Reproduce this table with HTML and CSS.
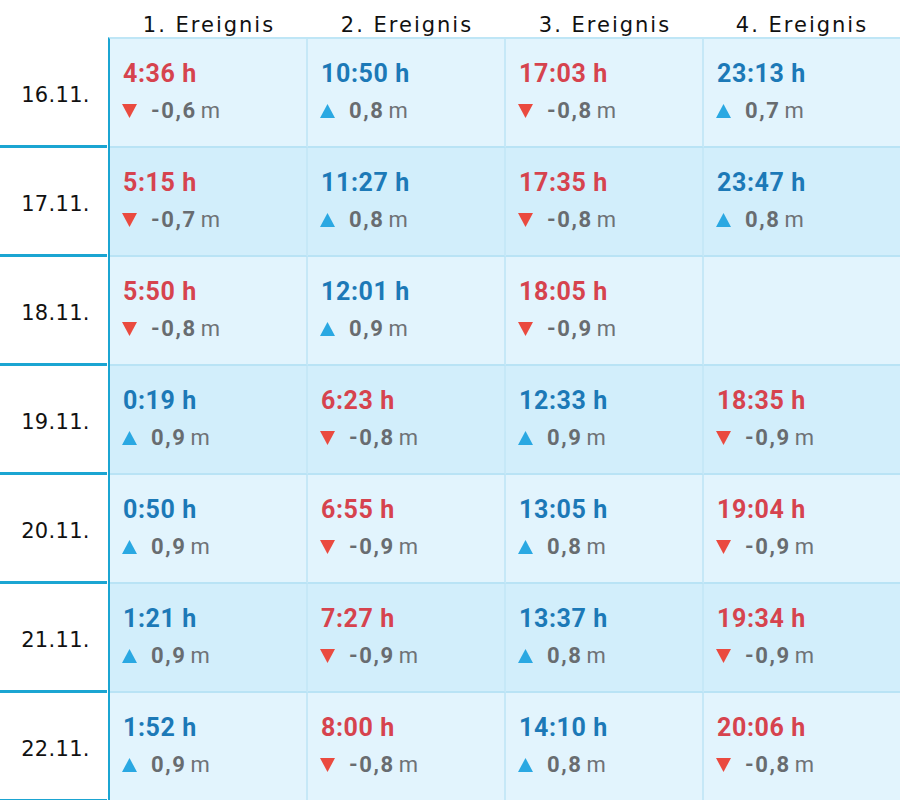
FILE: index.html
```html
<!DOCTYPE html>
<html lang="de">
<head>
<meta charset="utf-8">
<title>Gezeiten</title>
<link rel="stylesheet" href="styles.css">
</head>
<body>
<div class="page">
  <div class="head">
    <div class="corner"></div>
    <div class="hcell">1. Ereignis</div>
    <div class="hcell">2. Ereignis</div>
    <div class="hcell">3. Ereignis</div>
    <div class="hcell">4. Ereignis</div>
  </div>
  <div class="body">
    <div class="dates">
      <div class="date">16.11.</div>
      <div class="date">17.11.</div>
      <div class="date">18.11.</div>
      <div class="date">19.11.</div>
      <div class="date">20.11.</div>
      <div class="date">21.11.</div>
      <div class="date">22.11.</div>
    </div>
    <div class="cells">
      <!-- 16.11. -->
      <div class="cell"><div class="time low">4:36 h</div><div class="lvl"><svg class="tri" viewBox="0 0 15 14"><polygon class="dn" points="0,0 15,0 7.5,14"/></svg><b>-0,6</b> m</div></div>
      <div class="cell"><div class="time high">10:50 h</div><div class="lvl"><svg class="tri" viewBox="0 0 15 14"><polygon class="up" points="7.5,0 15,14 0,14"/></svg><b>0,8</b> m</div></div>
      <div class="cell"><div class="time low">17:03 h</div><div class="lvl"><svg class="tri" viewBox="0 0 15 14"><polygon class="dn" points="0,0 15,0 7.5,14"/></svg><b>-0,8</b> m</div></div>
      <div class="cell last"><div class="time high">23:13 h</div><div class="lvl"><svg class="tri" viewBox="0 0 15 14"><polygon class="up" points="7.5,0 15,14 0,14"/></svg><b>0,7</b> m</div></div>
      <!-- 17.11. -->
      <div class="cell alt"><div class="time low">5:15 h</div><div class="lvl"><svg class="tri" viewBox="0 0 15 14"><polygon class="dn" points="0,0 15,0 7.5,14"/></svg><b>-0,7</b> m</div></div>
      <div class="cell alt"><div class="time high">11:27 h</div><div class="lvl"><svg class="tri" viewBox="0 0 15 14"><polygon class="up" points="7.5,0 15,14 0,14"/></svg><b>0,8</b> m</div></div>
      <div class="cell alt"><div class="time low">17:35 h</div><div class="lvl"><svg class="tri" viewBox="0 0 15 14"><polygon class="dn" points="0,0 15,0 7.5,14"/></svg><b>-0,8</b> m</div></div>
      <div class="cell alt last"><div class="time high">23:47 h</div><div class="lvl"><svg class="tri" viewBox="0 0 15 14"><polygon class="up" points="7.5,0 15,14 0,14"/></svg><b>0,8</b> m</div></div>
      <!-- 18.11. -->
      <div class="cell"><div class="time low">5:50 h</div><div class="lvl"><svg class="tri" viewBox="0 0 15 14"><polygon class="dn" points="0,0 15,0 7.5,14"/></svg><b>-0,8</b> m</div></div>
      <div class="cell"><div class="time high">12:01 h</div><div class="lvl"><svg class="tri" viewBox="0 0 15 14"><polygon class="up" points="7.5,0 15,14 0,14"/></svg><b>0,9</b> m</div></div>
      <div class="cell"><div class="time low">18:05 h</div><div class="lvl"><svg class="tri" viewBox="0 0 15 14"><polygon class="dn" points="0,0 15,0 7.5,14"/></svg><b>-0,9</b> m</div></div>
      <div class="cell last"></div>
      <!-- 19.11. -->
      <div class="cell alt"><div class="time high">0:19 h</div><div class="lvl"><svg class="tri" viewBox="0 0 15 14"><polygon class="up" points="7.5,0 15,14 0,14"/></svg><b>0,9</b> m</div></div>
      <div class="cell alt"><div class="time low">6:23 h</div><div class="lvl"><svg class="tri" viewBox="0 0 15 14"><polygon class="dn" points="0,0 15,0 7.5,14"/></svg><b>-0,8</b> m</div></div>
      <div class="cell alt"><div class="time high">12:33 h</div><div class="lvl"><svg class="tri" viewBox="0 0 15 14"><polygon class="up" points="7.5,0 15,14 0,14"/></svg><b>0,9</b> m</div></div>
      <div class="cell alt last"><div class="time low">18:35 h</div><div class="lvl"><svg class="tri" viewBox="0 0 15 14"><polygon class="dn" points="0,0 15,0 7.5,14"/></svg><b>-0,9</b> m</div></div>
      <!-- 20.11. -->
      <div class="cell"><div class="time high">0:50 h</div><div class="lvl"><svg class="tri" viewBox="0 0 15 14"><polygon class="up" points="7.5,0 15,14 0,14"/></svg><b>0,9</b> m</div></div>
      <div class="cell"><div class="time low">6:55 h</div><div class="lvl"><svg class="tri" viewBox="0 0 15 14"><polygon class="dn" points="0,0 15,0 7.5,14"/></svg><b>-0,9</b> m</div></div>
      <div class="cell"><div class="time high">13:05 h</div><div class="lvl"><svg class="tri" viewBox="0 0 15 14"><polygon class="up" points="7.5,0 15,14 0,14"/></svg><b>0,8</b> m</div></div>
      <div class="cell last"><div class="time low">19:04 h</div><div class="lvl"><svg class="tri" viewBox="0 0 15 14"><polygon class="dn" points="0,0 15,0 7.5,14"/></svg><b>-0,9</b> m</div></div>
      <!-- 21.11. -->
      <div class="cell alt"><div class="time high">1:21 h</div><div class="lvl"><svg class="tri" viewBox="0 0 15 14"><polygon class="up" points="7.5,0 15,14 0,14"/></svg><b>0,9</b> m</div></div>
      <div class="cell alt"><div class="time low">7:27 h</div><div class="lvl"><svg class="tri" viewBox="0 0 15 14"><polygon class="dn" points="0,0 15,0 7.5,14"/></svg><b>-0,9</b> m</div></div>
      <div class="cell alt"><div class="time high">13:37 h</div><div class="lvl"><svg class="tri" viewBox="0 0 15 14"><polygon class="up" points="7.5,0 15,14 0,14"/></svg><b>0,8</b> m</div></div>
      <div class="cell alt last"><div class="time low">19:34 h</div><div class="lvl"><svg class="tri" viewBox="0 0 15 14"><polygon class="dn" points="0,0 15,0 7.5,14"/></svg><b>-0,9</b> m</div></div>
      <!-- 22.11. -->
      <div class="cell"><div class="time high">1:52 h</div><div class="lvl"><svg class="tri" viewBox="0 0 15 14"><polygon class="up" points="7.5,0 15,14 0,14"/></svg><b>0,9</b> m</div></div>
      <div class="cell"><div class="time low">8:00 h</div><div class="lvl"><svg class="tri" viewBox="0 0 15 14"><polygon class="dn" points="0,0 15,0 7.5,14"/></svg><b>-0,8</b> m</div></div>
      <div class="cell"><div class="time high">14:10 h</div><div class="lvl"><svg class="tri" viewBox="0 0 15 14"><polygon class="up" points="7.5,0 15,14 0,14"/></svg><b>0,8</b> m</div></div>
      <div class="cell last"><div class="time low">20:06 h</div><div class="lvl"><svg class="tri" viewBox="0 0 15 14"><polygon class="dn" points="0,0 15,0 7.5,14"/></svg><b>-0,8</b> m</div></div>
    </div>
  </div>
</div>
</body>
</html>
```

FILE: styles.css
```css
html, body {
  margin: 0;
  padding: 0;
  background: #ffffff;
}
body {
  width: 900px;
  height: 800px;
  overflow: hidden;
}
.page {
  width: 900px;
}
.head {
  display: grid;
  grid-template-columns: 110px 198px 198px 198px 1fr;
  height: 37px;
}
.hcell {
  box-sizing: border-box;
  height: 37px;
  padding-top: 14px;
  text-align: center;
  font-family: "DejaVu Sans", sans-serif;
  font-size: 21px;
  line-height: 23px;
  letter-spacing: 2px;
  color: #111111;
}
.body {
  display: flex;
}
.dates {
  width: 108px;
  padding-top: 2px;
  flex: none;
}
.date {
  box-sizing: border-box;
  height: 109px;
  display: flex;
  align-items: center;
  justify-content: center;
  padding-top: 5px;
  padding-left: 4px;
  border-bottom: 3px solid #1ba5d2;
  font-family: "DejaVu Sans", sans-serif;
  font-size: 21px;
  letter-spacing: 0.3px;
  color: #111111;
  margin-right: 1px;
}
.cells {
  flex: 1;
  display: grid;
  grid-template-columns: 198px 198px 198px 1fr;
  grid-auto-rows: 109px;
  border-left: 2px solid #1ba5d2;
  border-top: 2px solid #bfe6f6;
}
.cell {
  box-sizing: border-box;
  background: #e2f4fd;
  border-right: 2px solid #c6e8f7;
  border-bottom: 2px solid #b9e3f5;
  padding: 20px 0 0 12px;
  font-family: Roboto, "Noto Sans", sans-serif;
}
.cell.alt {
  background: #d2eefb;
}
.cell.last {
  border-right: none;
}
.time {
  font-size: 25px;
  line-height: 30px;
  font-weight: 700;
  letter-spacing: 0.6px;
  margin-left: 1px;
}
.time.low {
  color: #d6434e;
}
.time.high {
  color: #1c79b7;
}
.lvl {
  margin-top: 9px;
  font-size: 22px;
  line-height: 26px;
  color: #6e7276;
  display: flex;
  align-items: center;
}
.lvl b {
  font-weight: 700;
  color: #686c70;
  letter-spacing: 1.6px;
  margin-right: 4px;
}
.tri {
  width: 15px;
  height: 14px;
  margin-right: 14px;
  flex: none;
}
.dn {
  fill: #ea4a3f;
}
.up {
  fill: #2aa8e2;
}
```
